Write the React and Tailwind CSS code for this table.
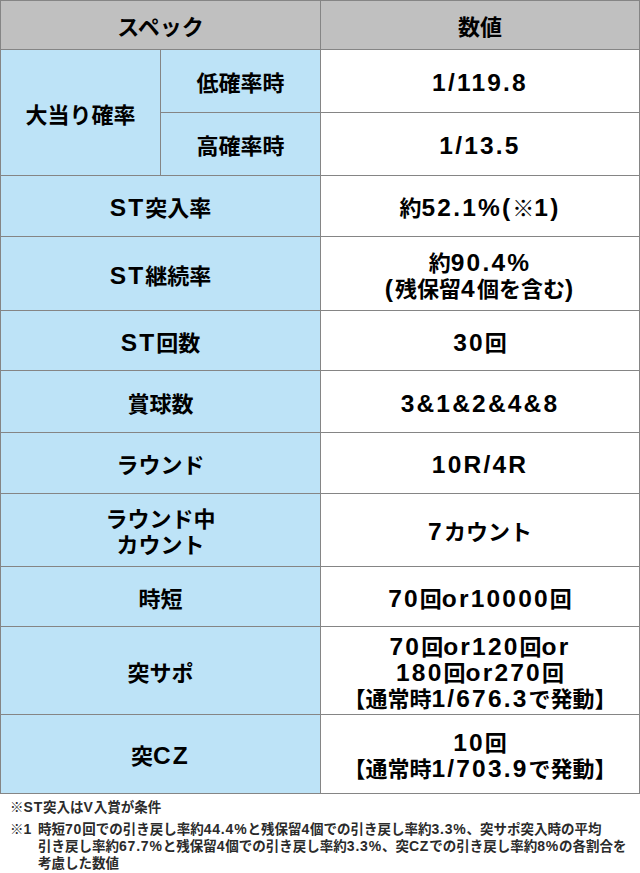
import React from "react";

const rows = [
  { label: "ST突入率", value: ["約52.1%(※1)"], h: "h-[61px]" },
  { label: "ST継続率", value: ["約90.4%", "(残保留4個を含む)"], h: "h-[74px]" },
  { label: "ST回数", value: ["30回"], h: "h-[60px]" },
  { label: "賞球数", value: ["3&1&2&4&8"], h: "h-[62px]" },
  { label: "ラウンド", value: ["10R/4R"], h: "h-[61px]" },
  { label: ["ラウンド中", "カウント"], value: ["7カウント"], h: "h-[73px]" },
  { label: "時短", value: ["70回or10000回"], h: "h-[60px]" },
  {
    label: "突サポ",
    value: ["70回or120回or", "180回or270回", "【通常時1/676.3で発動】"],
    h: "h-[88px]",
  },
  { label: "突CZ", value: ["10回", "【通常時1/703.9で発動】"], h: "h-[79px]" },
];

const cell = "border border-[#858585] text-center align-middle";
const blue = "bg-[#bde3f7]";

// latin runs get a wider face than the japanese text around them
const Mixed = ({ text, small }) =>
  text.split(/([\x21-\x7e]+)/).map((part, i) =>
    i % 2 ? (
      <span
        key={i}
        className={
          small
            ? "font-['Liberation_Sans'] text-[14px] tracking-[0.8px]"
            : "font-['Liberation_Sans'] text-[24.5px] tracking-[2.2px]"
        }
      >
        {part}
      </span>
    ) : (
      <span key={i}>{part}</span>
    )
  );

const Lines = ({ items }) =>
  (Array.isArray(items) ? items : [items]).map((t, i) => (
    <div key={i} className="h-[26px]">
      <Mixed text={t} />
    </div>
  ));

const Note = ({ text }) => (
  <div className="h-[17px] whitespace-nowrap">
    <Mixed text={text} small />
  </div>
);

export default function App() {
  return (
    <div
      className="w-[640px] bg-white text-black"
      style={{ fontFamily: '"Noto Sans CJK JP", "Noto Sans", sans-serif' }}
    >
      <table className="w-[640px] border-collapse table-fixed text-[22px] font-bold leading-[26px]">
        <colgroup>
          <col className="w-[160px]" />
          <col className="w-[160px]" />
          <col />
        </colgroup>
        <tbody>
          <tr className="h-[49px] bg-[#c0c0c0]">
            <td colSpan={2} className={cell}>
              スペック
            </td>
            <td className={cell}>数値</td>
          </tr>
          <tr className="h-[63px]">
            <td rowSpan={2} className={`${cell} ${blue}`}>
              大当り確率
            </td>
            <td className={`${cell} ${blue}`}>低確率時</td>
            <td className={cell}>
              <Lines items="1/119.8" />
            </td>
          </tr>
          <tr className="h-[63px]">
            <td className={`${cell} ${blue}`}>高確率時</td>
            <td className={cell}>
              <Lines items="1/13.5" />
            </td>
          </tr>
          {rows.map((r, i) => (
            <tr key={i} className={r.h}>
              <td colSpan={2} className={`${cell} ${blue}`}>
                <Lines items={r.label} />
              </td>
              <td className={cell}>
                <Lines items={r.value} />
              </td>
            </tr>
          ))}
        </tbody>
      </table>
      <div className="px-[10px] pt-[4px] text-[13.5px] font-bold leading-[17px] text-[#2b2b2b]">
        <div className="mb-[5px]">
          <Note text="※ST突入はV入賞が条件" />
        </div>
        <div className="flex">
          <span className="w-[28px] shrink-0">
            <Note text="※1" />
          </span>
          <div>
            <Note text="時短70回での引き戻し率約44.4%と残保留4個での引き戻し率約3.3%、突サポ突入時の平均" />
            <Note text="引き戻し率約67.7%と残保留4個での引き戻し率約3.3%、突CZでの引き戻し率約8%の各割合を" />
            <Note text="考慮した数値" />
          </div>
        </div>
      </div>
    </div>
  );
}
